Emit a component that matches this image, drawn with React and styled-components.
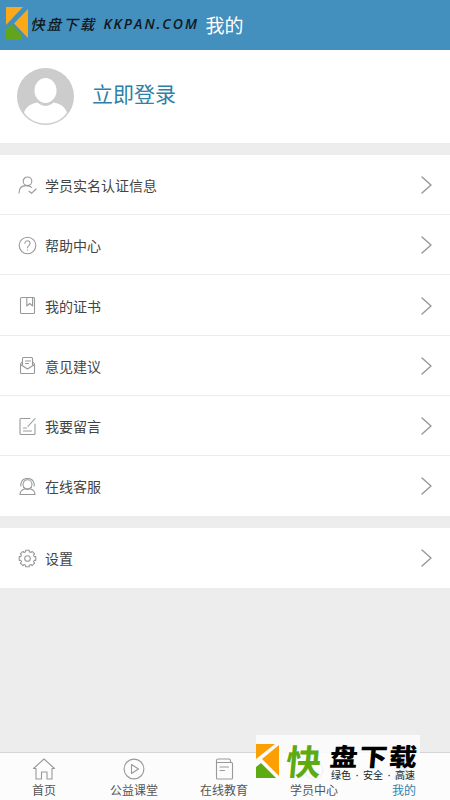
import React from 'react'
import styled, { createGlobalStyle } from 'styled-components'

const GlobalStyle = createGlobalStyle`
  * {
    box-sizing: border-box;
  }
  body {
    margin: 0;
    background: #ededed;
    font-family: "Noto Sans CJK SC", "Noto Sans", sans-serif;
  }
`
const Page = styled.div`
  position: relative;
  display: flex;
  flex-direction: column;
  width: 450px;
  height: 800px;
  overflow: hidden;
  background: #ededed;
`
const Header = styled.header`
  display: flex;
  align-items: center;
  justify-content: center;
  flex: none;
  height: 50px;
  padding-right: 1px;
  background: #438fbe;
`
const Title = styled.h1`
  margin: 0;
  font-size: 19px;
  line-height: 28px;
  font-weight: 400;
  color: #fff;
`
const Profile = styled.section`
  display: flex;
  gap: 18px;
  flex: none;
  height: 93px;
  padding: 18px 17px 0;
  background: #fff;
`
const Login = styled.a`
  font-size: 21px;
  line-height: 30px;
  margin-top: 10px;
  color: #2f7fa8;
`
const Group = styled.ul`
  flex: none;
  margin: 12px 0 0;
  padding: 0;
  list-style: none;
  background: #fff;
`
const Row = styled.li`
  display: flex;
  align-items: center;
  height: 60.2px;
  padding: 1.4px 17px 0 18px;
  border-bottom: 1px solid ${props => props.$last ? 'transparent' : '#ededed'};
`
const RowLabel = styled.span`
  flex: 1;
  margin-left: 8px;
  font-size: 14px;
  line-height: 20px;
  color: #444;
`
const Icon = styled.svg`
  display: block;
  flex: none;
  fill: none;
  stroke: ${props => props.$active ? '#2f82ac' : '#999'};
  stroke-width: 1.1;
  stroke-linecap: round;
  stroke-linejoin: round;
`
const TabBar = styled.nav`
  display: grid;
  grid-template-columns: repeat(5, 1fr);
  flex: none;
  height: 48px;
  margin-top: auto;
  border-top: 1px solid #d4d4d4;
  background: #fcfcfc;
`
const Tab = styled.div`
  display: flex;
  flex-direction: column;
  align-items: center;
  padding: 4px 2px 0 0;
  font-size: 12px;
  line-height: 18px;
  white-space: nowrap;
  color: ${props => props.$active ? '#2f82ac' : '#555'};
`
const TopMark = styled.div`
  position: absolute;
  top: 7px;
  left: 6px;
  display: flex;
  align-items: center;
  height: 33px;
`
const TopName = styled.span`
  margin-left: 2px;
  font-size: 14.5px;
  line-height: 20px;
  font-weight: 500;
  font-style: italic;
  letter-spacing: 2.1px;
  white-space: nowrap;
  color: #101820;
`
const TopSite = styled(TopName)`
  margin-left: 7px;
  font-family: "Open Sans", sans-serif;
  font-size: 14px;
  font-weight: 600;
  letter-spacing: 2px;
`
const BottomMark = styled.div`
  position: absolute;
  left: 256px;
  top: 735px;
  display: flex;
  width: 164px;
  height: 46px;
  padding-top: 9px;
  background: rgba(252, 252, 252, 0.88);
`
const Kuai = styled.span`
  width: 36px;
  margin-left: 7px;
  font-size: 35px;
  line-height: 31px;
  font-weight: 700;
  color: #5cab12;
  transform: skewX(-5deg);
`
const Brand = styled.div`
  display: flex;
  flex-direction: column;
  width: 90px;
  margin-left: 8px;
`
const BrandName = styled.span`
  font-size: 28px;
  line-height: 22px;
  font-weight: 900;
  letter-spacing: 1.6px;
  white-space: nowrap;
  color: #000;
  transform: skewX(-5deg) scaleY(0.88);
`
const Slogan = styled.div`
  display: flex;
  justify-content: space-between;
  width: 84px;
  margin: 3px 0 0 1px;
  font-family: "Noto Sans", "Noto Sans CJK SC", sans-serif;
  font-size: 10px;
  line-height: 12px;
  white-space: nowrap;
  color: #222;
`

// eight teeth spread evenly round the centre
function gearPath(c, inner, outer) {
  const points = []
  for (let i = 0; i < 8; i++) {
    const mid = (i * Math.PI) / 4 - Math.PI / 2
    const corners = [[-0.27, inner], [-0.22, outer], [0.22, outer], [0.27, inner]]
    corners.forEach(([turn, r]) => {
      const x = c + r * Math.cos(mid + turn)
      const y = c + r * Math.sin(mid + turn)
      points.push(`${x.toFixed(2)} ${y.toFixed(2)}`)
    })
  }
  return `M${points.join('L')}z`
}

const rowIcons = {
  verify: (
    <>
      <circle cx="9" cy="4.8" r="4.3" />
      <path d="M.5 16.500c0-4.500 2.500-7.400 7-7.400 2.500 0 4.500.6 5.700 1.900M10.500 14.800l2.500 2L17.500 12.500" />
    </>
  ),
  help: (
    <>
      <circle cx="9" cy="9" r="8.3" />
      <path d="M6.400 6.800a2.600 2.600 0 1 1 4.200 2.100C9.400 9.900 9 10.300 9 11.300M9 13.300v.3" />
    </>
  ),
  book: (
    <>
      <rect x="2" y="1" width="14" height="16" rx="1" />
      <path d="M8.300 1.500v8l2.900-2.500 2.900 2.500v-8" />
    </>
  ),
  mail: (
    <path d="M4 8V2c0-.6.4-1 1-1h8c.6 0 1 .4 1 1v6M4 5L2 7.500V16c0 .6.4 1 1 1h12c.6 0 1-.4 1-1V7.500L14 5M2 8l7 4.500L16 8M7 4.500h5M7 7h3" />
  ),
  edit: (
    <path d="M11.500 1h-9c-.6 0-1 .4-1 1v14c0 .6.4 1 1 1h13c.6 0 1-.4 1-1V6.500M16.500 1l-7 8M5 10.500h3M5 13.500h8" />
  ),
  service: (
    <>
      <circle cx="9" cy="6.800" r="4.500" />
      <path d="M2.500 6a6.600 6 0 0 1 13 0M2.300 6v2.500M15.700 6v2.500M5 10c1.500 2.600 6.500 2.600 8 0M6.300 11.200C3.500 12.200 1.500 14 1.500 17h15c0-3-2-4.800-4.800-5.800" />
    </>
  ),
  settings: (
    <>
      <path d={gearPath(9, 6.9, 8.5)} />
      <circle cx="9" cy="9" r="2.8" />
    </>
  )
}

const tabIcons = {
  home: <path d="M1.500 11.500L12 2l10.500 9.500h-2.500V22h-5v-7H9.500v7H4V11.500z" />,
  play: (
    <>
      <circle cx="12" cy="12" r="9.900" />
      <path d="M9.500 7.500v9l7-4.500z" />
    </>
  ),
  course: (
    <path d="M4.500 5.500V3.500c0-1 .5-1.500 1.500-1.500h11c1 0 1.500.5 1.500 1.500v2M5 5.500h14.500c.7 0 1 .3 1 1v14.500c0 .7-.3 1-1 1H5.500c-.7 0-1-.3-1-1V5.500zM8 10h8.500M8 13.500h4.500" />
  ),
  student: (
    <>
      <circle cx="12" cy="13" r="9" />
      <path d="M8 14a4 4 0 0 0 8 0" />
    </>
  ),
  mine: (
    <g fill="#2f82ac">
      <circle cx="12" cy="7" r="5" />
      <path d="M3 22c0-6 3-9 9-9s9 3 9 9z" />
    </g>
  )
}

const account = [
  { icon: 'verify', label: '学员实名认证信息' },
  { icon: 'help', label: '帮助中心' },
  { icon: 'book', label: '我的证书' },
  { icon: 'mail', label: '意见建议' },
  { icon: 'edit', label: '我要留言' },
  { icon: 'service', label: '在线客服' }
]
const system = [{ icon: 'settings', label: '设置' }]

const tabs = [
  { icon: 'home', label: '首页' },
  { icon: 'play', label: '公益课堂' },
  { icon: 'course', label: '在线教育' },
  { icon: 'student', label: '学员中心' },
  { icon: 'mine', label: '我的', active: true }
]

function Menu({ items }) {
  return (
    <Group>
      {items.map((item, i) => (
        <Row key={item.label} $last={i === items.length - 1}>
          <Icon width="19" height="19" viewBox="-.5 -.5 19 19">{rowIcons[item.icon]}</Icon>
          <RowLabel>{item.label}</RowLabel>
          <Icon width="14" height="20" viewBox="0 0 14 20">
            <path d="M3 2l9 8-9 8" strokeWidth="1.5" />
          </Icon>
        </Row>
      ))}
    </Group>
  )
}

function Avatar() {
  return (
    <svg width="57" height="57" viewBox="0 0 57 57">
      <circle cx="28.5" cy="28.5" r="28.5" fill="#ccc" />
      <ellipse cx="28.5" cy="22.5" rx="11" ry="12.5" fill="#fff" />
      <path d="M7 44.500c2-5.500 6.500-9 13.500-10 5 4.500 11 4.500 16 0 7 1 11.500 4.500 13.500 10-5 7-12.500 11-21.500 11S12 51.500 7 44.500z" fill="#fff" />
    </svg>
  )
}

function TopLogo() {
  return (
    <svg width="22" height="33" viewBox="0 0 22 33">
      <path d="M0 0h17L0 18z" fill="#fba919" />
      <path d="M22 2v29L8 16.500z" fill="#fba919" />
      <path d="M0 22l6-5 10 11v5H0z" fill="#62a51c" />
    </svg>
  )
}

function BottomLogo() {
  return (
    <svg width="23" height="34" viewBox="0 0 23 34">
      <path d="M0 0h19L0 15z" fill="#fb9f05" />
      <path d="M23 1v31L6 15z" fill="#fb9f05" />
      <path d="M0 23l5-4 15 15H0z" fill="#5cab12" />
    </svg>
  )
}

export default function App() {
  return (
    <Page>
      <GlobalStyle />
      <Header>
        <Title>我的</Title>
      </Header>
      <Profile>
        <Avatar />
        <Login>立即登录</Login>
      </Profile>
      <Menu items={account} />
      <Menu items={system} />
      <TabBar>
        {tabs.map(tab => (
          <Tab key={tab.label} $active={tab.active}>
            <Icon width="24" height="24" viewBox="0 0 24 24" $active={tab.active}>{tabIcons[tab.icon]}</Icon>
            {tab.label}
          </Tab>
        ))}
      </TabBar>
      <TopMark>
        <TopLogo />
        <TopName>快盘下载</TopName>
        <TopSite>KKPAN.COM</TopSite>
      </TopMark>
      <BottomMark>
        <BottomLogo />
        <Kuai>快</Kuai>
        <Brand>
          <BrandName>盘下载</BrandName>
          <Slogan>
            <span>绿色</span>
            <span>·</span>
            <span>安全</span>
            <span>·</span>
            <span>高速</span>
          </Slogan>
        </Brand>
      </BottomMark>
    </Page>
  )
}
